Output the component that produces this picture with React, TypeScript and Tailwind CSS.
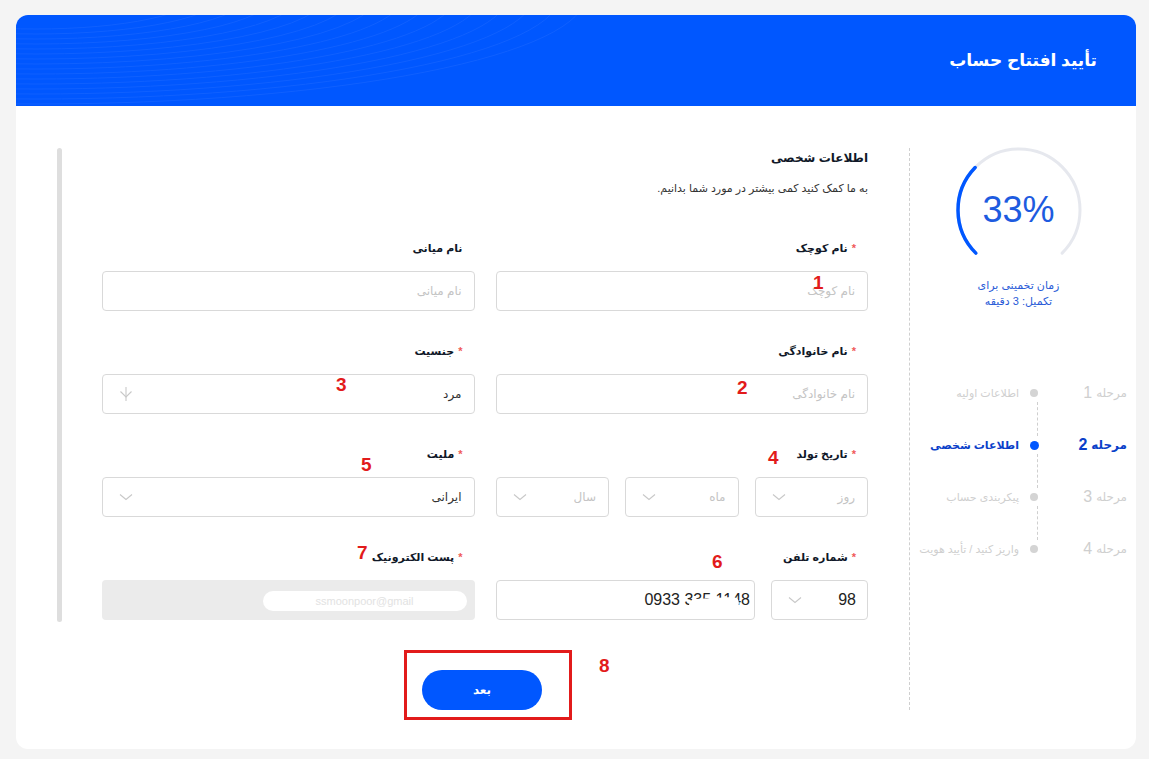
const FONT = '"Liberation Sans", "DejaVu Sans", sans-serif';

const steps = [
  { n: '1', label: 'اطلاعات اولیه', active: false },
  { n: '2', label: 'اطلاعات شخصی', active: true },
  { n: '3', label: 'پیکربندی حساب', active: false },
  { n: '4', label: 'واریز کنید / تأیید هویت', active: false },
];

const marks = [
  { t: '1', x: 813, y: 272 },
  { t: '2', x: 737, y: 377 },
  { t: '3', x: 336, y: 374 },
  { t: '4', x: 768, y: 447 },
  { t: '5', x: 361, y: 454 },
  { t: '6', x: 712, y: 551 },
  { t: '7', x: 357, y: 542 },
  { t: '8', x: 599, y: 655 },
];

function Label({ text, required }: { text: string; required?: boolean }) {
  return (
    <div className="h-[18px] mb-[14px] pr-[12px] flex items-center text-[11px] font-bold text-[#101828]">
      {required && <span className="text-[#f05a5a] ml-[4px]">*</span>}
      {text}
    </div>
  );
}

function Chevron() {
  return (
    <svg width="14" height="8" viewBox="0 0 14 8" fill="none" stroke="#c8c8c8" strokeWidth="1.1">
      <path d="M1 1.5 7 6.5l6-5" />
    </svg>
  );
}

function Select({ value, placeholder, icon }: { value?: string; placeholder?: string; icon?: 'arrow' }) {
  return (
    <div className="h-[40px] border border-[#d9d9d9] rounded-[4px] flex items-center justify-between pr-[12px] pl-[16px] bg-white">
      {value ? (
        <span className="text-[12px] text-[#333]">{value}</span>
      ) : (
        <span className="text-[12px] text-[#c4c4c4]">{placeholder}</span>
      )}
      {icon === 'arrow' ? (
        <svg width="14" height="16" viewBox="0 0 14 16" fill="none" stroke="#c8c8c8" strokeWidth="1.1">
          <path d="M7 1v14" />
          <path d="M1.5 5.5 7 11l5.5-5.5" />
        </svg>
      ) : (
        <Chevron />
      )}
    </div>
  );
}

function Input({ placeholder }: { placeholder: string }) {
  return (
    <div className="h-[40px] border border-[#d9d9d9] rounded-[4px] flex items-center pr-[12px] bg-white">
      <span className="text-[12px] text-[#c4c4c4]">{placeholder}</span>
    </div>
  );
}

function Gauge() {
  return (
    <div className="relative w-[128px] h-[128px] mt-[-2px]">
      <svg width="128" height="128" viewBox="0 0 128 128" fill="none">
        <path d="M20.87 107.13 A61 61 0 1 1 107.13 107.13" stroke="#e6e8ee" strokeWidth="3" strokeLinecap="round" />
        <path d="M20.87 107.13 A61 61 0 0 1 20.17 21.55" stroke="#0057ff" strokeWidth="3.5" strokeLinecap="round" />
      </svg>
      <div className="absolute inset-0 flex items-center justify-center text-[36px] text-[#1d5be0]" dir="ltr">
        33%
      </div>
    </div>
  );
}

export default function App() {
  return (
    <div className="relative min-h-screen bg-[#f4f4f4] pt-[15px] pl-[16px] pr-[13px] pb-[10px]" style={{ fontFamily: FONT }}>
      <div className="bg-white rounded-[12px] overflow-hidden" dir="rtl">
        {/* header */}
        <div className="relative h-[91px] bg-[#0057ff] flex items-center pr-[39px] overflow-hidden">
          <svg className="absolute left-0 top-0" width="1120" height="91" fill="none">
            {Array.from({ length: 16 }).map((_, i) => (
              <ellipse
                key={i}
                cx={20}
                cy={-20}
                rx={160 + i * 26}
                ry={34 + i * 5}
                stroke="white"
                strokeOpacity={0.06}
                strokeWidth={1}
              />
            ))}
          </svg>
          <h1 className="relative text-white text-[17px] font-bold">تأیید افتتاح حساب</h1>
        </div>

        {/* body */}
        <div className="flex pt-[42px] pb-[39px]">
          {/* sidebar */}
          <div className="w-[227px] shrink-0 border-l border-dashed border-[#cfcfcf] pr-[9px] flex flex-col">
            <div className="flex justify-center">
              <Gauge />
            </div>
            <div className="mt-[3px] text-center text-[11px] leading-[16px] text-[#2a5bd7]">
              <div>زمان تخمینی برای</div>
              <div>تکمیل: 3 دقیقه</div>
            </div>
            <div className="mt-[75px] flex flex-col">
              {steps.map((s, i) => (
                <div key={s.n}>
                  <div className="h-[18px] flex items-center">
                    <div className={`w-[86px] shrink-0 flex items-center gap-[4px] ${s.active ? 'text-[#0a3fc9] font-bold' : 'text-[#cfcfcf]'}`}>
                      <span className="text-[12px]">مرحله</span>
                      <span className="text-[16px]">{s.n}</span>
                    </div>
                    <div className="w-[14px] shrink-0 flex justify-center">
                      <span className={`rounded-full ${s.active ? 'w-[9px] h-[9px] bg-[#0057ff]' : 'w-[8px] h-[8px] bg-[#d4d4d4]'}`} />
                    </div>
                    <span className={`mr-[8px] whitespace-nowrap text-[11px] ${s.active ? 'text-[#0a3fc9] font-bold' : 'text-[#cfcfcf]'}`}>
                      {s.label}
                    </span>
                  </div>
                  {i < steps.length - 1 && <div className="h-[34px] mr-[89px] border-r border-dashed border-[#cfcfcf]" />}
                </div>
              ))}
            </div>
          </div>

          {/* form area */}
          <div className="flex-1 flex pr-[41px] gap-[40px]">
            <div className="w-[766px] shrink-0">
              <div className="h-[20px] flex items-center text-[12px] font-bold text-[#101828]">اطلاعات شخصی</div>
              <div className="mt-[12px] h-[16px] flex items-center text-[11px] text-[#333]">
                به ما کمک کنید کمی بیشتر در مورد شما بدانیم.
              </div>

              <div className="mt-[43px] grid grid-cols-2 gap-x-[21px] gap-y-[31px]">
                <div>
                  <Label text="نام کوچک" required />
                  <Input placeholder="نام کوچک" />
                </div>
                <div>
                  <Label text="نام میانی" />
                  <Input placeholder="نام میانی" />
                </div>

                <div>
                  <Label text="نام خانوادگی" required />
                  <Input placeholder="نام خانوادگی" />
                </div>
                <div>
                  <Label text="جنسیت" required />
                  <Select value="مرد" icon="arrow" />
                </div>

                <div>
                  <Label text="تاریخ تولد" required />
                  <div className="grid grid-cols-3 gap-[16px]">
                    <Select placeholder="روز" />
                    <Select placeholder="ماه" />
                    <Select placeholder="سال" />
                  </div>
                </div>
                <div>
                  <Label text="ملیت" required />
                  <Select value="ایرانی" />
                </div>

                <div>
                  <Label text="شماره تلفن" required />
                  <div className="flex gap-[16px]">
                    <div className="w-[97px] shrink-0 h-[40px] border border-[#d9d9d9] rounded-[4px] flex items-center justify-between pr-[11px] pl-[16px]">
                      <span className="text-[16px] text-[#222]">98</span>
                      <Chevron />
                    </div>
                    <div className="relative flex-1 h-[40px] border border-[#d9d9d9] rounded-[4px] flex items-center pr-[4px] overflow-hidden">
                      <span className="text-[16px] text-[#222]" dir="ltr">0933 335 1148</span>
                      <div className="absolute left-[192px] top-[17px] w-[50px] h-[12px] bg-white rotate-[-3deg] rounded-full" />
                    </div>
                  </div>
                </div>
                <div>
                  <Label text="پست الکترونیک" required />
                  <div className="relative h-[40px] rounded-[4px] bg-[#ebebeb]">
                    <div className="absolute right-[8px] top-[11px] w-[204px] h-[20px] bg-white rounded-full flex items-center justify-center overflow-hidden">
                      <span className="text-[11px] text-[#e2e2e2]" dir="ltr">ssmoonpoor@gmail</span>
                    </div>
                  </div>
                </div>
              </div>

              <div className="mt-[50px] flex justify-center pr-[6px]">
                <button className="w-[120px] h-[40px] rounded-full bg-[#0057ff] text-white text-[12px] font-bold">
                  بعد
                </button>
              </div>
            </div>

            {/* scrollbar */}
            <div className="w-[5px] h-[474px] rounded-full bg-[#dedede] shrink-0" />
          </div>
        </div>
      </div>

      {/* annotation overlays */}
      {marks.map((m) => (
        <span
          key={m.t}
          className="absolute text-[19px] font-bold leading-[22px] text-[#e21b1b]"
          style={{ left: m.x, top: m.y }}
        >
          {m.t}
        </span>
      ))}
      <div className="absolute left-[404px] top-[650px] w-[168px] h-[70px] border-[3px] border-[#e21b1b]" />
    </div>
  );
}
